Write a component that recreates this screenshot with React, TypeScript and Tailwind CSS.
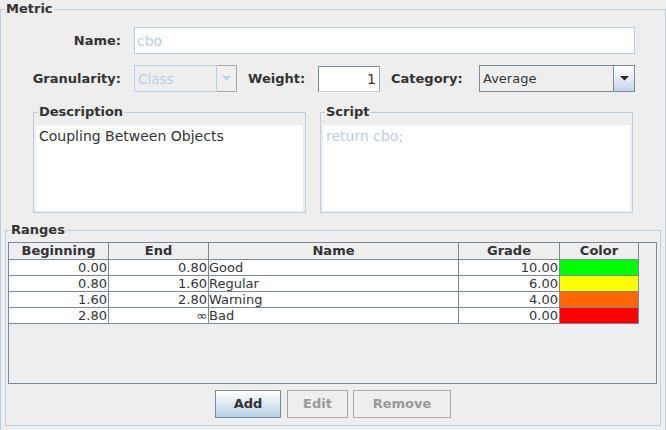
import type { ReactNode } from "react";

const ranges = [
  { begin: "0.00", end: "0.80", name: "Good", grade: "10.00", color: "bg-[#00ff00]" },
  { begin: "0.80", end: "1.60", name: "Regular", grade: "6.00", color: "bg-[#ffff00]" },
  { begin: "1.60", end: "2.80", name: "Warning", grade: "4.00", color: "bg-[#ff6600]" },
  { begin: "2.80", end: "∞", name: "Bad", grade: "0.00", color: "bg-[#ff0000]" },
];

function Titled({ title, className, children }: { title: string; className: string; children: ReactNode }) {
  return (
    <fieldset className={`border border-[#b8cfe5] ${className}`}>
      <legend className="ml-[4px] px-[1px] text-[13px] font-bold leading-[16px] text-[#333333]">{title}</legend>
      {children}
    </fieldset>
  );
}

function Arrow({ color }: { color: string }) {
  return (
    <svg width="9" height="5" viewBox="0 0 9 5">
      <polygon points="0,0 9,0 4.5,4.5" fill={color} />
    </svg>
  );
}

export default function App() {
  return (
    <div className="h-[430px] w-[666px] overflow-hidden bg-[#eeeeee] font-['DejaVu_Sans',sans-serif] text-[13px] leading-[16px] text-[#333333]">
      <Titled title="Metric" className="mt-[1px] h-[440px] w-[666px]">
        {/* Name */}
        <div className="mt-[10px] flex items-center">
          <span className="w-[120px] text-right font-bold">Name:</span>
          <div className="ml-[13px] flex h-[27px] w-[501px] items-center border border-[#b8cfe5] bg-white pl-[2px] text-[14px] text-[#b8cfe5]">
            cbo
          </div>
        </div>

        {/* Granularity / Weight / Category */}
        <div className="mt-[11px] flex items-center">
          <span className="w-[120px] text-right font-bold">Granularity:</span>
          <div className="ml-[13px] flex h-[27px] w-[103px]">
            <div className="flex w-[83px] items-center border border-[#b8cfe5] bg-[#eeeeee] pl-[3px] text-[13.5px] text-[#b8cfe5]">
              Class
            </div>
            <div className="flex w-[20px] items-center justify-center border border-l-0 border-[#a8a8a8] bg-[#eeeeee]">
              <Arrow color="#b8cfe5" />
            </div>
          </div>
          <span className="ml-[11px] w-[57px] font-bold">Weight:</span>
          <div className="ml-[13px] flex h-[26px] w-[62px] items-center justify-end border border-[#7a8a99] border-b-[#c9d3dc] border-r-[#9aa8b6] bg-white pr-[3px] text-[14px]">
            1
          </div>
          <span className="ml-[11px] w-[75px] font-bold">Category:</span>
          <div className="ml-[13px] flex h-[27px] w-[156px] border border-[#7a8a99]">
            <div className="flex flex-1 items-center bg-[#eeeeee] pl-[3px]">Average</div>
            <div className="flex w-[21px] items-center justify-center border-l border-[#7a8a99] bg-linear-to-b from-white to-[#c3d6ea]">
              <Arrow color="#222222" />
            </div>
          </div>
        </div>

        {/* Description / Script */}
        <div className="mt-[12px] flex">
          <Titled title="Description" className="ml-[32px] h-[109px] w-[273px]">
            <div className="mx-[2px] mt-[5px] h-[86px] bg-white px-[3px] pt-[3px] text-[14px]">Coupling Between Objects</div>
          </Titled>
          <Titled title="Script" className="ml-[14px] h-[109px] w-[313px]">
            <div className="mx-[2px] mt-[5px] h-[86px] bg-white px-[3px] pt-[3px] text-[14px] text-[#b8cfe5]">return cbo;</div>
          </Titled>
        </div>

        {/* Ranges */}
        <Titled title="Ranges" className="ml-[4px] mt-[9px] h-[204px] w-[656px]">
          <div className="ml-[2px] mt-[4px] h-[142px] w-[649px] border border-[#7a8a99] bg-[#eeeeee]">
            <div className="flex h-[17px] w-[630px] border-b border-[#7a8a99] font-bold">
              <div className="w-[100px] border-r border-[#7a8a99] text-center">Beginning</div>
              <div className="w-[100px] border-r border-[#7a8a99] text-center">End</div>
              <div className="w-[250px] border-r border-[#7a8a99] text-center">Name</div>
              <div className="w-[101px] border-r border-[#7a8a99] text-center">Grade</div>
              <div className="w-[79px] border-r border-[#7a8a99] text-center">Color</div>
            </div>
            {ranges.map((r) => (
              <div key={r.name} className="flex h-[16px] w-[630px] border-b border-[#7a8a99] bg-white leading-[15px]">
                <div className="w-[100px] border-r border-[#7a8a99] pr-[1px] text-right">{r.begin}</div>
                <div className="w-[100px] border-r border-[#7a8a99] pr-[1px] text-right">{r.end}</div>
                <div className="w-[250px] border-r border-[#7a8a99]">{r.name}</div>
                <div className="w-[101px] border-r border-[#7a8a99] pr-[1px] text-right">{r.grade}</div>
                <div className={`w-[79px] border-r border-[#7a8a99] ${r.color}`} />
              </div>
            ))}
          </div>

          <div className="mt-[6px] flex justify-center font-bold">
            <button className="flex h-[28px] w-[66px] items-center justify-center border border-[#7a8a99] bg-linear-to-b from-white to-[#b8cfe5] text-[#333333]">
              Add
            </button>
            <button className="ml-[6px] flex h-[28px] w-[61px] items-center justify-center border border-[#a8a8a8] bg-[#eeeeee] text-[#999999]">
              Edit
            </button>
            <button className="ml-[5px] flex h-[28px] w-[98px] items-center justify-center border border-[#a8a8a8] bg-[#eeeeee] text-[#999999]">
              Remove
            </button>
          </div>
        </Titled>
      </Titled>
    </div>
  );
}
